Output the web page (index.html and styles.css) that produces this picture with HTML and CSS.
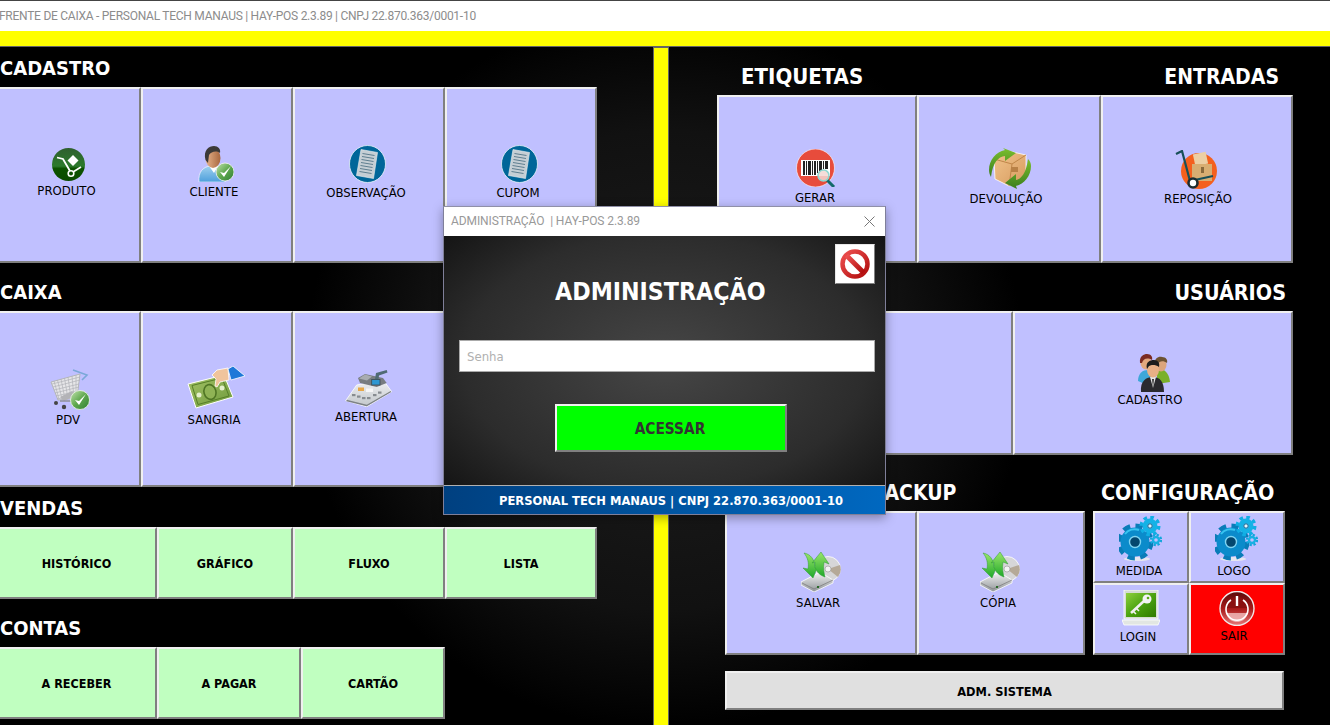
FILE: index.html
```html
<!DOCTYPE html>
<html lang="pt-BR">
<head>
<meta charset="utf-8">
<title>Frente de Caixa</title>
<link rel="stylesheet" href="styles.css">
</head>
<body>
<svg class="defs" aria-hidden="true">
  <defs>
    <linearGradient id="gProd" x1="0" y1="0" x2="0" y2="1"><stop offset="0" stop-color="#2f5f2f"/><stop offset=".55" stop-color="#2c7a2c"/><stop offset=".62" stop-color="#0c5200"/><stop offset="1" stop-color="#0a4a00"/></linearGradient>
    <linearGradient id="gCheck" x1="0" y1="0" x2="1" y2="1"><stop offset="0" stop-color="#c4e4b0"/><stop offset=".5" stop-color="#5fa84e"/><stop offset="1" stop-color="#2f7f35"/></linearGradient>
    <linearGradient id="gShirt" x1="0" y1="0" x2="0" y2="1"><stop offset="0" stop-color="#9fd0ee"/><stop offset="1" stop-color="#4d9fdc"/></linearGradient>
    <linearGradient id="gSkin" x1="0" y1="0" x2="1" y2="0"><stop offset="0" stop-color="#e8b48c"/><stop offset="1" stop-color="#a8683f"/></linearGradient>
    <linearGradient id="gBill" x1="0" y1="0" x2="1" y2="1"><stop offset="0" stop-color="#a4c266"/><stop offset="1" stop-color="#6e9a3c"/></linearGradient>
    <linearGradient id="gReg" x1="0" y1="0" x2="0" y2="1"><stop offset="0" stop-color="#f0f1f2"/><stop offset="1" stop-color="#c2c7ca"/></linearGradient>
    <linearGradient id="gBox" x1="0" y1="0" x2="1" y2="1"><stop offset="0" stop-color="#f2c48c"/><stop offset="1" stop-color="#d69a5e"/></linearGradient>
    <linearGradient id="gArrow" x1="0" y1="0" x2="0" y2="1"><stop offset="0" stop-color="#7bbf2e"/><stop offset="1" stop-color="#3a7d1e"/></linearGradient>
    <linearGradient id="gHdd" x1="0" y1="0" x2="0" y2="1"><stop offset="0" stop-color="#f4f4f4"/><stop offset="1" stop-color="#8f9497"/></linearGradient>
    <linearGradient id="gDiskArrow" x1="0" y1="0" x2="0" y2="1"><stop offset="0" stop-color="#9be66a"/><stop offset="1" stop-color="#1fa82a"/></linearGradient>
    <linearGradient id="gLogin" x1="0" y1="0" x2="1" y2="1"><stop offset="0" stop-color="#8ccf3c"/><stop offset=".5" stop-color="#4ba310"/><stop offset="1" stop-color="#2f7a00"/></linearGradient>
    <linearGradient id="gPower" x1="0" y1="0" x2="0" y2="1"><stop offset="0" stop-color="#5a0a0a"/><stop offset=".5" stop-color="#a81818"/><stop offset="1" stop-color="#e87878"/></linearGradient>
    <linearGradient id="gStop" x1="0" y1="0" x2="1" y2="1"><stop offset="0" stop-color="#ee5050"/><stop offset="1" stop-color="#b00c0c"/></linearGradient>

    <symbol id="i-produto" viewBox="0 0 33 33">
      <circle cx="16.5" cy="16.5" r="16.5" fill="url(#gProd)"/>
      <path d="M5 9.500 L11 11 L18 23" fill="none" stroke="#fff" stroke-width="1.800"/>
      <path d="M21 7 L26.500 12.500 L21 18 L15.500 12.500Z" fill="#fff"/>
      <path d="M21 24 L29 19" fill="none" stroke="#fff" stroke-width="1.600"/>
      <circle cx="19" cy="25.500" r="2.800" fill="none" stroke="#fff" stroke-width="1.600"/>
    </symbol>

    <symbol id="i-cliente" viewBox="0 0 36 36">
      <path d="M1 36 C0 26 5 21 12 20 L22 21 C26 23 27 28 27 36Z" fill="url(#gShirt)" stroke="#fff" stroke-width=".6"/>
      <path d="M11 20 L16 27 L20 20Z" fill="#fff"/>
      <ellipse cx="15" cy="12" rx="7.500" ry="10" fill="url(#gSkin)"/>
      <path d="M7.500 14 C5 4 11 0 16 0 C20 0 23 3 22 7 C18 4 13 6 11 9 L10 17Z" fill="#3c3a38"/>
      <circle cx="27" cy="26" r="9" fill="url(#gCheck)" stroke="#f2f2f2" stroke-width=".8"/>
      <path d="M22 26 L26 31 L33 20 L26 27Z" fill="#fff"/>
    </symbol>

    <symbol id="i-doc" viewBox="0 0 37 38">
      <ellipse cx="18.5" cy="19" rx="18" ry="18.5" fill="#006699" stroke="#e8f2f8" stroke-width=".8"/>
      <path d="M12 4.500 L28.500 7.500 L24.500 33.500 L7.500 30.500Z" fill="#c5ced4" stroke="#eef2f4" stroke-width=".6"/>
      <g stroke="#5f7f90" stroke-width="1">
        <path d="M13.500 8.500 L25.500 10.500"/><path d="M13 11.500 L25 13.500"/><path d="M12.500 14.500 L24.500 16.500"/><path d="M12 17.500 L24 19.500"/><path d="M11.500 20.500 L23.500 22.500"/><path d="M11 23.500 L23 25.500"/><path d="M10.500 26.500 L22.500 28.500"/>
      </g>
    </symbol>

    <symbol id="i-cart" viewBox="0 0 40 42">
      <path d="M1 14 L30 6 L27 30 L8 32Z" fill="#e6e6e8" stroke="#b4b6ba" stroke-width="1"/>
      <g stroke="#b0b2b8" stroke-width=".7" fill="none">
        <path d="M4 13 L9 31"/><path d="M7.500 12 L12 31"/><path d="M11 11 L15 31"/><path d="M14.500 10 L18 31"/><path d="M18 9 L21 30.500"/><path d="M22 8 L24 30.500"/><path d="M26 7 L26 30"/>
        <path d="M2 16 L30 9"/><path d="M3 19 L30 12"/><path d="M4 22 L29 16"/><path d="M5 25 L29 19"/><path d="M6 28 L28 23"/><path d="M7 31 L27 27"/>
      </g>
      <path d="M10 29 L22 23 L27 27 L14 33Z" fill="#b3b3b7"/>
      <path d="M23 2 L37 7 L32 12" fill="none" stroke="#7aa8d8" stroke-width="1.600"/>
      <path d="M10 33 L28 33" stroke="#8d8f93" stroke-width="1.400"/>
      <circle cx="6" cy="35" r="2" fill="#444"/><circle cx="14" cy="39" r="2.200" fill="#444"/>
      <circle cx="30" cy="32" r="9.500" fill="url(#gCheck)" stroke="#eef6e8" stroke-width=".8"/>
      <path d="M25 32 L29 37 L36 26 L29 33Z" fill="#fff"/>
    </symbol>

    <symbol id="i-money" viewBox="0 0 58 43">
      <path d="M1 18 L37 9 L46 31 L9 42Z" fill="url(#gBill)" stroke="#fff" stroke-width="1"/>
      <path d="M5 19.500 L35 12 L42 30 L11 38.500Z" fill="none" stroke="#567f28" stroke-width="1"/>
      <ellipse cx="23" cy="26" rx="6" ry="7.500" fill="#8fb355" stroke="#4f7524" stroke-width="1.600" transform="rotate(-15 23 26)"/>
      <circle cx="12" cy="29" r="2.500" fill="#e4efcc"/><circle cx="35" cy="22" r="2.500" fill="#e4efcc"/>
      <path d="M25 9 L30 4 L41 2 L42 14 L33 16 L30 21 L28 20 L29 13Z" fill="#f0c49c" stroke="#fff" stroke-width=".8"/>
      <path d="M41 3 L46 0 L58 10 L44 14Z" fill="#1e78d8" stroke="#fff" stroke-width=".8"/>
    </symbol>

    <symbol id="i-reg" viewBox="0 0 47 38">
      <path d="M.7 31.700 L11.700 16 L38.300 11 L46.700 22.700 L21.700 37.700Z" fill="url(#gReg)" stroke="#fff" stroke-width=".8"/>
      <path d="M13 9 L20 5 L38 9 L41.700 14 L31.700 18 L15 14Z" fill="#777c80"/>
      <path d="M20 5.500 L27 7.500 L22 11.500 L14 9.500Z" fill="#a8acb0"/>
      <rect x="26.700" y="10.500" width="8.300" height="5.500" fill="#2e97d2" stroke="#3c4a52" stroke-width=".8"/>
      <path d="M30 10 L31 4 L41.700 1 L42.500 3.500 L34 6.500 L33.500 10Z" fill="#4f6a74"/>
      <rect x="13" y="18.500" width="6" height="3.500" fill="#e8a848"/><rect x="21" y="19.500" width="7" height="3.500" fill="#f6f6f6"/>
      <g fill="#878c90"><rect x="7" y="25" width="3.500" height="2.200"/><rect x="12" y="26.500" width="3.500" height="2.200"/><rect x="17" y="28" width="3.500" height="2.200"/><rect x="22" y="28" width="3.500" height="2.200"/><rect x="28" y="25" width="3.500" height="2.200"/><rect x="33" y="22.500" width="3.500" height="2.200"/></g>
      <path d="M1.500 31.500 L21.700 36.500 L46 22.500" fill="none" stroke="#7d8286" stroke-width="1.300"/>
    </symbol>

    <symbol id="i-barcode" viewBox="0 0 40 38">
      <circle cx="19.500" cy="19" r="19" fill="#e74c3c" stroke="#fff" stroke-width=".6"/>
      <rect x="5" y="11" width="29" height="16" fill="#fff"/>
      <g fill="#222"><rect x="7" y="12" width="2" height="14"/><rect x="10" y="12" width="1" height="14"/><rect x="12" y="12" width="3" height="14"/><rect x="16" y="12" width="1" height="14"/><rect x="18" y="12" width="2" height="14"/><rect x="21" y="12" width="1" height="12"/><rect x="23" y="12" width="3" height="10"/><rect x="27" y="12" width="1" height="8"/><rect x="29" y="12" width="3" height="8"/></g>
      <path d="M31 31 L38 38" stroke="#136a6a" stroke-width="3"/>
      <circle cx="27.500" cy="26.500" r="5.500" fill="#f4d8d4" fill-opacity=".85" stroke="#8fd8d0" stroke-width="1.500"/>
    </symbol>

    <symbol id="i-box" viewBox="0 0 44 41">
      <path d="M6 11 L20 3 L38 7 L38 29 L21 38 L7 31Z" fill="url(#gBox)" stroke="#fff" stroke-width=".8"/>
      <path d="M6 11 L24 16 L38 7" fill="none" stroke="#c08648" stroke-width="1"/>
      <path d="M24 16 L21 38" stroke="#c08648" stroke-width="1"/>
      <rect x="23" y="19" width="7" height="5" fill="#b98146"/>
      <path d="M1 22 C1 12 8 4 17 2 L15 0 L28 5 L17 13 L17 8 C10 9 5 14 3 29 C2 27 1 25 1 22Z" fill="url(#gArrow)"/>
      <path d="M43 18 C43 28 36 36 28 38 L29 41 L17 35 L28 26 L28 32 C33 31 38 26 40 11 C42 13 43 15 43 18Z" fill="url(#gArrow)"/>
    </symbol>

    <symbol id="i-trolley" viewBox="0 0 42 39">
      <circle cx="24" cy="21" r="18" fill="#f4601e"/>
      <rect x="19" y="3" width="13" height="12" fill="#eccfa4" transform="rotate(-12 25 9)"/>
      <rect x="17" y="14" width="20" height="17" fill="#d8ae72"/>
      <rect x="26" y="17" width="3" height="6" fill="#8a6a3c"/>
      <path d="M1 4 L7 1 L15 31 L38 26" fill="none" stroke="#174f58" stroke-width="2.200"/>
      <circle cx="18" cy="33" r="4.500" fill="#fff" stroke="#1d2d30" stroke-width="2.600"/>
    </symbol>

    <symbol id="i-people" viewBox="0 0 35 38">
      <path d="M3 27 C3 19 8 16 13 16 L18 24 L10 30Z" fill="#3da7d9"/>
      <ellipse cx="11" cy="9" rx="5.500" ry="6.500" fill="#e2a77e"/>
      <path d="M5 9 C4 2 9 0 12 0 C16 0 18 3 17 6 C12 3 8 5 7 9Z" fill="#7b2b22"/>
      <path d="M22 30 L22 15 C28 14 34 18 35 28Z" fill="#7ab02a"/>
      <ellipse cx="26" cy="11" rx="5.500" ry="6.500" fill="#dba57c"/>
      <path d="M20 10 C19 4 24 2 27 3 C31 3 33 6 32 9 C28 6 24 7 22 11Z" fill="#6c5232"/>
      <path d="M6 38 C5 27 11 23 18 23 C25 23 29 28 29 38Z" fill="#2a2a2e"/>
      <path d="M15 23 L18 34 L21 23Z" fill="#e4e4e4"/><path d="M17 25 L18 34 L19 25Z" fill="#333"/>
      <ellipse cx="18" cy="16" rx="6" ry="7.500" fill="#e8b086"/>
      <path d="M12 15 C10 8 15 6 19 6 C23 6 25 9 24 13 C20 10 16 11 14 12Z" fill="#1c1c1c"/>
    </symbol>

    <symbol id="i-disk" viewBox="0 0 41 40">
      <circle cx="27" cy="17" r="12.500" fill="#d6d6d8" stroke="#fff" stroke-width=".8"/>
      <path d="M27 17 L39 13 A12.500 12.500 0 0 1 37 25Z" fill="#b5a998"/>
      <circle cx="27" cy="17" r="3" fill="#f4f4f4" stroke="#909090" stroke-width=".6"/>
      <path d="M0 30 L19 20 L32 28 L32 31 L13 40 L0 33Z" fill="url(#gHdd)" stroke="#fff" stroke-width=".8"/>
      <path d="M1 31 L13 37 L32 28" fill="none" stroke="#777" stroke-width=".7"/>
      <rect x="16" y="34" width="2" height="2" fill="#2a6a2a"/>
      <path d="M3 1 C9 2 14 7 14 16 L17 14 L12 26 L2 16 L7 17 C8 11 7 6 3 1Z" fill="url(#gDiskArrow)" stroke="#2e9a36" stroke-width=".5"/>
      <path d="M24 25 C18 23 13 18 14 10 L11 11 L20 0 L28 12 L23 10 C22 16 23 21 24 25Z" fill="url(#gDiskArrow)" stroke="#2e9a36" stroke-width=".5"/>
    </symbol>

    <symbol id="i-gear" viewBox="0 0 43 45">
      <ellipse cx="18" cy="43" rx="13" ry="2" fill="#e6e6f0"/>
      <g fill="none">
        <circle cx="16" cy="26" r="15.500" stroke-width="6" stroke-dasharray="7 5.170" stroke="#0a7cb8"/>
        <circle cx="16" cy="26" r="9.500" stroke-width="10" stroke="#0b8bcb"/>
        <circle cx="31" cy="10" r="8.800" stroke-width="3.400" stroke-dasharray="3.600 3.310" stroke="#10aee4"/>
        <circle cx="31" cy="10" r="5" stroke-width="5" stroke="#14b2e6"/>
        <circle cx="37" cy="24" r="5" stroke-width="2.400" stroke-dasharray="2.200 1.730" stroke="#12a6dc"/>
        <circle cx="37" cy="24" r="3" stroke-width="2.400" stroke="#18b0e2"/>
      </g>
      <circle cx="16" cy="26" r="5.500" fill="#04476e" stroke="#7fd4f2" stroke-width="1.400"/>
      <path d="M6 18 A12 12 0 0 1 20 14" fill="none" stroke="#38c4f0" stroke-width="2"/>
      <circle cx="31" cy="10" r="2.200" fill="#e6f4fb" stroke="#05638e" stroke-width="1"/>
    </symbol>

    <symbol id="i-login" viewBox="0 0 38 36">
      <rect x="2" y="0" width="34" height="29" fill="#d4dcd4" stroke="#fff" stroke-width=".8"/>
      <rect x="4" y="3" width="30" height="24" fill="url(#gLogin)"/>
      <path d="M0 30 L38 30 L36 35 L2 35Z" fill="#e2e6e2" stroke="#fff" stroke-width=".8"/>
      <path d="M9 23 L22 11" stroke="#f0f0f0" stroke-width="2.600"/>
      <circle cx="25" cy="9" r="4.500" fill="#f4f4f4"/><circle cx="26" cy="8" r="1.300" fill="#5aaa18"/>
      <path d="M11 21 L14 24 M14 18 L17 21" stroke="#f0f0f0" stroke-width="1.600"/>
    </symbol>

    <symbol id="i-power" viewBox="0 0 36 35">
      <circle cx="18" cy="17.500" r="17" fill="url(#gPower)" stroke="#f0e8e8" stroke-width="1.400"/>
      <path d="M6 17 A12 11 0 0 1 30 17" fill="#8a1010"/>
      <path d="M7 22 L29 22 C27 29 22 31 18 31 C14 31 9 29 7 22Z" fill="#f2c0c0" fill-opacity=".8"/>
      <path d="M12 9 A11 11 0 1 0 24 9" fill="none" stroke="#fff" stroke-width="1.600"/>
      <path d="M18 5 L18 15" stroke="#fff" stroke-width="2.400"/>
    </symbol>

    <symbol id="i-stop" viewBox="0 0 30 32">
      <circle cx="15" cy="16" r="12.500" fill="#fff" stroke="url(#gStop)" stroke-width="4.500"/>
      <path d="M6.500 7.500 L23.500 24.500" stroke="url(#gStop)" stroke-width="5"/>
    </symbol>
  </defs>
</svg>

<div class="app">
  <header class="titlebar"><span class="titlebar-text">FRENTE DE CAIXA - PERSONAL TECH MANAUS | HAY-POS 2.3.89 | CNPJ 22.870.363/0001-10</span></header>
  <div class="strip"></div>

  <main class="main">
    <section class="col-left">
      <h2 class="head h40">CADASTRO</h2>
      <div class="row row-4a h176">
        <div class="tile t-produto"><svg class="ico"><use href="#i-produto"/></svg><span class="lbl">PRODUTO</span></div>
        <div class="tile t-cliente"><svg class="ico"><use href="#i-cliente"/></svg><span class="lbl">CLIENTE</span></div>
        <div class="tile t-obs"><svg class="ico"><use href="#i-doc"/></svg><span class="lbl">OBSERVAÇÃO</span></div>
        <div class="tile t-cupom"><svg class="ico"><use href="#i-doc"/></svg><span class="lbl">CUPOM</span></div>
      </div>

      <h2 class="head h48">CAIXA</h2>
      <div class="row row-4a h176">
        <div class="tile t-pdv"><svg class="ico"><use href="#i-cart"/></svg><span class="lbl">PDV</span></div>
        <div class="tile t-sangria"><svg class="ico"><use href="#i-money"/></svg><span class="lbl">SANGRIA</span></div>
        <div class="tile t-abertura"><svg class="ico"><use href="#i-reg"/></svg><span class="lbl">ABERTURA</span></div>
        <div class="tile"></div>
      </div>

      <h2 class="head h40">VENDAS</h2>
      <div class="row row-4b h72">
        <div class="tile tile-green">HISTÓRICO</div>
        <div class="tile tile-green">GRÁFICO</div>
        <div class="tile tile-green">FLUXO</div>
        <div class="tile tile-green">LISTA</div>
      </div>

      <h2 class="head h48">CONTAS</h2>
      <div class="row row-3 h72">
        <div class="tile tile-green">A RECEBER</div>
        <div class="tile tile-green">A PAGAR</div>
        <div class="tile tile-green">CARTÃO</div>
      </div>
    </section>

    <div class="divider"></div>

    <section class="col-right">
      <div class="head h48 head-split"><h2 class="sub etq">ETIQUETAS</h2><h2 class="sub ent">ENTRADAS</h2></div>
      <div class="row row-etq h168">
        <div class="tile t-gerar"><svg class="ico"><use href="#i-barcode"/></svg><span class="lbl">GERAR</span></div>
        <div class="tile t-devolucao"><svg class="ico"><use href="#i-box"/></svg><span class="lbl">DEVOLUÇÃO</span></div>
        <div class="tile t-reposicao"><svg class="ico"><use href="#i-trolley"/></svg><span class="lbl">REPOSIÇÃO</span></div>
      </div>

      <div class="head h48 head-split head-end"><h2 class="sub usr">USUÁRIOS</h2></div>
      <div class="row row-usr h144">
        <div class="tile"></div>
        <div class="tile t-cadastro"><svg class="ico"><use href="#i-people"/></svg><span class="lbl">CADASTRO</span></div>
      </div>

      <div class="lower">
        <div class="backup">
          <h2 class="head h56 bk-head">BACKUP</h2>
          <div class="row row-bk h144">
            <div class="tile t-salvar"><svg class="ico"><use href="#i-disk"/></svg><span class="lbl">SALVAR</span></div>
            <div class="tile t-copia"><svg class="ico"><use href="#i-disk"/></svg><span class="lbl">CÓPIA</span></div>
          </div>
        </div>
        <div class="config">
          <h2 class="head h56 cfg-head">CONFIGURAÇÃO</h2>
          <div class="row row-cfg h144">
            <div class="tile t-medida"><svg class="ico"><use href="#i-gear"/></svg><span class="lbl">MEDIDA</span></div>
            <div class="tile t-logo"><svg class="ico"><use href="#i-gear"/></svg><span class="lbl">LOGO</span></div>
            <div class="tile t-login"><svg class="ico"><use href="#i-login"/></svg><span class="lbl">LOGIN</span></div>
            <div class="tile t-sair"><svg class="ico"><use href="#i-power"/></svg><span class="lbl">SAIR</span></div>
          </div>
        </div>
      </div>
      <div class="adm">ADM. SISTEMA</div>
    </section>
  </main>

  <div class="dialog">
    <div class="dlg-title">
      <span>ADMINISTRAÇÃO&nbsp; | HAY-POS 2.3.89</span>
      <svg class="dlg-x" viewBox="0 0 11 11"><path d="M.5 .5 L10.500 10.500 M10.500 .5 L.5 10.500" stroke="#777" stroke-width="1" fill="none"/></svg>
    </div>
    <div class="dlg-body">
      <div class="dlg-stop"><svg class="stop-ico"><use href="#i-stop"/></svg></div>
      <h1 class="dlg-head">ADMINISTRAÇÃO</h1>
      <input class="dlg-input" type="password" placeholder="Senha">
      <div class="dlg-btn">ACESSAR</div>
    </div>
    <div class="dlg-foot">PERSONAL TECH MANAUS | CNPJ 22.870.363/0001-10</div>
  </div>
</div>
</body>
</html>
```
FILE: styles.css
```css
* { box-sizing: border-box; }
html, body { margin: 0; padding: 0; width: 1330px; height: 725px; overflow: hidden; background: #000; }
body { font-family: "DejaVu Sans Condensed", "DejaVu Sans", sans-serif; }
.defs { position: absolute; width: 0; height: 0; }

.app { position: relative; width: 1330px; height: 725px; display: flex; flex-direction: column; overflow: hidden; }

.titlebar { flex: none; height: 31px; border-top: 1px solid #444; background: #fff; display: flex; align-items: center; }
.titlebar-text { margin-left: -1px; font: 12px/16px Roboto, sans-serif; letter-spacing: -.26px; color: #8c8c8c; white-space: nowrap; }
.strip { flex: none; height: 16px; background: #ff0; border-bottom: 1px solid #666; }

.main {
  flex: 1; display: grid; grid-template-columns: 653px 16px 661px; min-height: 0;
  background: radial-gradient(circle 360px at 665px 323px, #1e1e1e 0, #111 240px, #000 360px);
}
.divider { background: #ff0; border: 1px solid #666; border-bottom: 0; }
.col-left, .col-right { min-width: 0; }
.col-right { padding-left: 48px; }

.head { margin: 0; display: flex; align-items: flex-end; padding-bottom: 6px; color: #fff; font-size: 21.4px; line-height: 24px; font-weight: 700; }
.col-left .head { padding-left: 0; padding-bottom: 7px; font-size: 20px; }
.sub { margin: 0; font-size: 21.4px; line-height: 24px; font-weight: 700; color: #fff; }
.head-split { justify-content: space-between; width: 576px; }
.head-end { justify-content: flex-end; }
.etq { margin-left: 24px; font-size: 22px; }
.ent { margin-right: 14px; font-size: 21px; }
.usr { margin-right: 7px; }
.h40 { height: 40px; }
.h48 { height: 48px; }
.h56 { height: 56px; }
.h72 { height: 72px; }
.h144 { height: 144px; }
.h168 { height: 168px; }
.h176 { height: 176px; }

.row { display: grid; }
.row-4a { grid-template-columns: 141px 152px 152px 152px; width: 597px; }
.row-4b { grid-template-columns: 157px 136px 152px 152px; width: 597px; }
.row-3 { grid-template-columns: 157px 144px 144px; width: 445px; }
.row-etq { grid-template-columns: 200px 184px 192px; }
.row-usr { grid-template-columns: 296px 280px; }
.row-bk { grid-template-columns: 192px 168px; }
.row-cfg { grid-template-columns: 96px 96px; grid-template-rows: 72px 72px; }

.lower { display: flex; gap: 8px; margin-left: 8px; }
.backup { width: 360px; }
.config { width: 192px; }
.bk-head { padding-left: 145px; font-size: 21px; }
.cfg-head { padding-left: 8px; }

.tile {
  display: flex; flex-direction: column; align-items: center; min-width: 0;
  background: #c0c0ff; color: #000;
  border: 2px solid; border-color: #f0f0f0 #808080 #808080 #f0f0f0;
  padding-top: var(--pad, 0);
}
.col-left .tile:first-child { border-left: 0; }
.ico { display: block; flex: none; width: var(--iw, 36px); height: var(--ih, 36px); margin-left: var(--ix, 0); }
.lbl { display: block; font-size: 13px; line-height: 14px; white-space: nowrap; margin-top: var(--gap, 3px); margin-left: var(--lx, 0); }

.tile-green {
  background: #c0ffc0; justify-content: center; padding-top: 2px; font-size: 12.5px; font-weight: 700; line-height: 14px;
}
.col-left .tile-green:first-child { padding-right: 2px; }

.t-produto { --pad: 59px; --iw: 33px; --ih: 33px; --ix: -2px; --lx: -6px; --gap: 3px; }
.t-cliente { --pad: 57px; --iw: 36px; --ih: 36px; --ix: -2px; --lx: -6px; --gap: 3px; }
.t-obs { --pad: 56px; --iw: 37px; --ih: 38px; --ix: -3px; --lx: -6px; --gap: 3px; }
.t-cupom { --pad: 56px; --iw: 37px; --ih: 38px; --ix: -3px; --lx: -6px; --gap: 3px; }
.t-pdv { --pad: 55px; --iw: 40px; --ih: 42px; --ix: 1px; --lx: -3px; --gap: 3px; }
.t-sangria { --pad: 53px; --iw: 58px; --ih: 43px; --ix: -2px; --lx: -6px; --gap: 4px; }
.t-abertura { --pad: 56px; --iw: 47px; --ih: 38px; --ix: -1px; --lx: -6px; --gap: 3px; }
.t-gerar { --pad: 52px; --iw: 40px; --ih: 38px; --ix: -2px; --lx: -4px; --gap: 4px; }
.t-devolucao { --pad: 51px; --iw: 44px; --ih: 41px; --ix: 2px; --lx: -6px; --gap: 3px; }
.t-reposicao { --pad: 53px; --iw: 42px; --ih: 39px; --ix: -2px; --lx: 2px; --gap: 3px; }
.t-cadastro { --pad: 41px; --iw: 35px; --ih: 38px; --ix: -1px; --lx: -6px; --gap: 1px; }
.t-salvar { --pad: 39px; --iw: 41px; --ih: 40px; --ix: 1px; --lx: -6px; --gap: 4px; }
.t-copia { --pad: 39px; --iw: 41px; --ih: 40px; --ix: -1px; --lx: -6px; --gap: 4px; }
.t-medida { --pad: 3px; --iw: 43px; --ih: 45px; --ix: -1px; --lx: -4px; --gap: 3px; }
.t-logo { --pad: 3px; --iw: 43px; --ih: 45px; --ix: -1px; --lx: -6px; --gap: 3px; }
.t-login { --pad: 5px; --iw: 38px; --ih: 36px; --ix: 0px; --lx: -6px; --gap: 4px; }
.t-sair { --pad: 6px; --iw: 36px; --ih: 35px; --ix: 0px; --lx: -6px; --gap: 3px; background: #f00; }

.adm {
  margin: 16px 0 0 8px; width: 559px; height: 39px; display: flex; align-items: center; justify-content: center;
  padding-top: 2px;
  background: #e0e0e0; color: #000; font-size: 12.7px; font-weight: 700;
  border: 2px solid; border-color: #f0f0f0 #808080 #808080 #f0f0f0;
}

.dialog {
  position: absolute; left: 443px; top: 206px; width: 443px; height: 309px;
  display: flex; flex-direction: column;
  border: 1px solid #7f7f99; border-top-color: #9090a8;
  box-shadow: 0 3px 10px rgba(0, 0, 0, .35);
}
.dlg-title {
  flex: none; height: 29px; background: #fff; display: flex; align-items: center; justify-content: space-between;
  padding: 0 10px 1px 7px; font: 12px/16px Roboto, sans-serif; letter-spacing: -.09px; color: #999;
}
.dlg-x { width: 11px; height: 11px; }
.dlg-body {
  position: relative; flex: 1; min-height: 0; padding-top: 41px;
  display: flex; flex-direction: column;
  background: radial-gradient(ellipse 310px 195px at 221px 125px, #464646 0, #2c2c2c 65%, #111 100%);
}
.dlg-stop {
  position: absolute; left: 391px; top: 8px; width: 40px; height: 40px;
  display: flex; align-items: center; justify-content: center;
  background: #fff; border: 1px solid; border-color: #e8e8e8 #808080 #808080 #e8e8e8;
}
.stop-ico { width: 30px; height: 32px; }
.dlg-head { margin: 0 0 0 111px; width: 212px; height: 30px; color: #fff; font-size: 24.7px; line-height: 30px; font-weight: 700; white-space: nowrap; }
.dlg-input {
  display: block; margin: 33px 0 0 15px; width: 416px; height: 32px; padding: 0 7px;
  background: #fff; border: 1px solid #aaa; border-radius: 0; outline: 0;
  font-family: "DejaVu Sans Condensed", "DejaVu Sans", sans-serif; font-size: 13px;
}
.dlg-input::placeholder { color: #b0b0b0; opacity: 1; }
.dlg-btn {
  margin: 32px 0 0 111px; width: 232px; height: 48px; display: flex; align-items: center; justify-content: center;
  padding: 1px 2px 0 0;
  background: #0f0; color: #333; font-size: 15.3px; font-weight: 700;
  border: 2px solid; border-color: #f0f0f0 #808080 #808080 #f0f0f0;
}
.dlg-foot {
  flex: none; height: 29px; display: flex; align-items: center; justify-content: center; padding-left: 13px;
  border-top: 1px solid #b0b0b0; color: #fff; font-size: 12.8px; font-weight: 700; white-space: nowrap;
  background: linear-gradient(90deg, #004080, #0068c0);
}
```
